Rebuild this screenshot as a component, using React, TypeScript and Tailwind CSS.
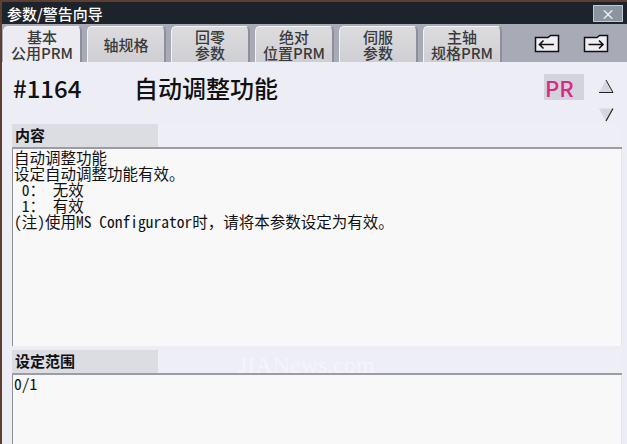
import React from "react";

const tabs = [
  ["基本", "公用PRM"],
  ["轴规格"],
  ["回零", "参数"],
  ["绝对", "位置PRM"],
  ["伺服", "参数"],
  ["主轴", "规格PRM"],
];

const cjk = { fontFamily: '"Noto Sans CJK SC", "Noto Sans", sans-serif' };
const mono = {
  fontFamily: '"Noto Sans Mono CJK SC", "Noto Sans CJK SC", "DejaVu Sans Mono", monospace',
};

function PageArrow({ dir }: { dir: "left" | "right" }) {
  return (
    <svg width="26" height="19" viewBox="0 0 26 19">
      <path d="M1.5 3.5 H14 L16.5 1.5 H24.5 V17.5 H1.5 Z" fill="#eeeef4" stroke="#111" strokeWidth="1.5" />
      {dir === "left" ? (
        <path d="M20 10.5 H5.5 M9.5 6.5 L5.5 10.5 L9.5 14.5" fill="none" stroke="#111" strokeWidth="1.6" />
      ) : (
        <path d="M5.5 10.5 H20 M16 6.5 L20 10.5 L16 14.5" fill="none" stroke="#111" strokeWidth="1.6" />
      )}
    </svg>
  );
}

function Section({
  title,
  children,
  className,
}: {
  title: string;
  children: React.ReactNode;
  className: string;
}) {
  return (
    <div className={`flex flex-col ${className}`}>
      <div className="flex h-[23px] shrink-0">
        <div className="flex w-[146px] items-center bg-[#dcdce3] pl-[3px] text-[15px] font-bold text-[#111]">
          {title}
        </div>
        <div className="flex-1 bg-[#eeeef6]" />
      </div>
      <div className="h-[2px] shrink-0 bg-[#9c9ca4]" />
      <div
        className="flex-1 whitespace-pre border-l border-r border-l-[#8f8f96] border-r-[#e6e6ec] bg-[#f8f8f8] pl-[1px] text-[15.5px] leading-[16px] text-[#111]"
        style={mono}
      >
        {children}
      </div>
    </div>
  );
}

export default function App() {
  return (
    <div
      className="relative flex h-[444px] w-[627px] flex-col overflow-hidden border-l-2 border-t-2 border-l-[#5e3e31] border-t-[#5e3e31] bg-[#ededf6]"
      style={cjk}
    >
      {/* title bar */}
      <div className="flex h-[22px] shrink-0 items-center justify-between bg-[#1d232b] pl-[5px] pr-[4px]">
        <span className="text-[15px] font-medium leading-none text-white">参数/警告向导</span>
        <div className="flex h-[17px] w-[30px] items-center justify-center border border-[#c2c8d0] bg-[#8a95a2] text-[14px] leading-none text-white">
          ×
        </div>
      </div>

      {/* tab bar */}
      <div className="flex h-[38px] shrink-0 items-end bg-[#a8aab6] pl-[1px]">
        <div className="flex gap-[5px]">
          {tabs.map((t, i) => (
            <div
              key={i}
              className={`flex h-[36px] w-[79px] flex-col items-center justify-center rounded-t-[5px] border-l border-r-2 border-t border-l-[#f4f4f6] border-r-[#8e8f98] border-t-[#f4f4f6] text-[15px] font-medium leading-[16px] text-[#3a3a3a] ${
                i === 0 ? "bg-[#ebebf1]" : "bg-gradient-to-b from-[#dcdcdf] to-[#cfcfd3]"
              }`}
            >
              {t.map((l, j) => (
                <span key={j}>{l}</span>
              ))}
            </div>
          ))}
        </div>
        <div className="flex flex-1 items-center justify-around self-stretch pl-[20px] pr-[6px]">
          <PageArrow dir="left" />
          <PageArrow dir="right" />
        </div>
      </div>

      {/* main */}
      <div className="flex flex-1 flex-col pl-[10px] pr-[5px]">
        <div className="flex h-[62px] shrink-0 items-start">
          <div className="mt-[11px] flex flex-1 items-center">
            <span className="w-[122px] pl-[1px] text-[24px] font-medium leading-[30px] text-[#111]">#1164</span>
            <span className="text-[24px] font-medium leading-[30px] text-[#111]">自动调整功能</span>
          </div>
          <div className="mt-[12px] flex h-[26px] w-[40px] items-center bg-[#d3d3dc] pl-[1px] text-[22px] font-medium leading-none text-[#d82a85]">
            PR
          </div>
          <div className="ml-[14px] mr-[8px] flex flex-col gap-[13px] pt-[17px]">
            <svg width="16" height="15" viewBox="0 0 16 15">
              <path d="M8 1 L15 13.5 H1 Z" fill="#d6d6de" />
              <path d="M8 1 L15 13.5 H1" fill="none" stroke="#222" strokeWidth="1" />
            </svg>
            <svg width="16" height="15" viewBox="0 0 16 15">
              <path d="M1 1.5 H15 L8 14 Z" fill="#d6d6de" />
              <path d="M15 1.5 L8 14" fill="none" stroke="#222" strokeWidth="1.2" />
            </svg>
          </div>
        </div>

        <Section title="内容" className="h-[222px] shrink-0">
          <div>自动调整功能</div>
          <div>设定自动调整功能有效。</div>
          <div> 0： 无效</div>
          <div> 1： 有效</div>
          <div>(注)使用MS Configurator时，请将本参数设定为有效。</div>
        </Section>

        <div className="h-[4px] shrink-0" />

        <Section title="设定范围" className="flex-1">
          <div>0/1</div>
        </Section>
      </div>

      <div
        className="pointer-events-none absolute left-[236px] top-[345px] text-[24px] text-white/40"
        style={{ fontFamily: '"Liberation Serif", serif' }}
      >
        JIANews.com
      </div>
    </div>
  );
}
